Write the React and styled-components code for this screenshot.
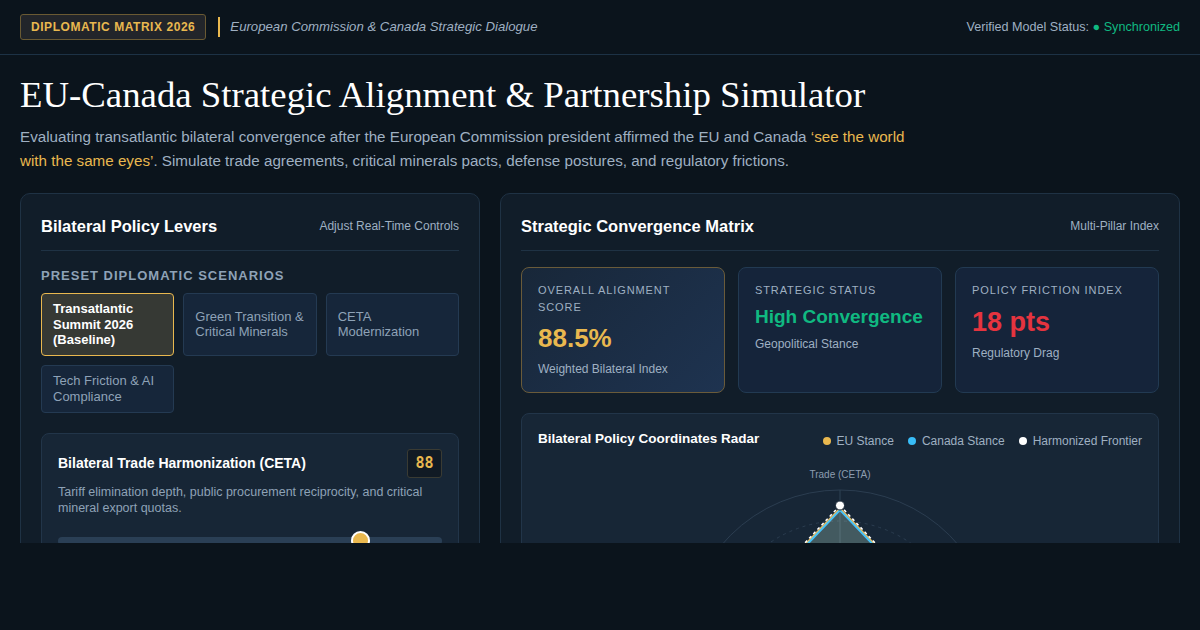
import React from "react";
import styled, { createGlobalStyle } from "styled-components";

const GlobalStyle = createGlobalStyle`
  html, body {
    margin: 0;
    padding: 0;
    background: #0b141c;
  }
  body {
    font-family: "Liberation Sans", Arial, sans-serif;
    color: #e6edf3;
  }
  * { box-sizing: border-box; }
`;

const scenarios = [
  { label: "Transatlantic Summit 2026 (Baseline)", active: true },
  { label: "Green Transition & Critical Minerals" },
  { label: "CETA Modernization" },
  { label: "Tech Friction & AI Compliance" },
];

const metrics = [
  { label: "Overall Alignment Score", value: "88.5%", sub: "Weighted Bilateral Index", tone: "gold", size: 26, featured: true },
  { label: "Strategic Status", value: "High Convergence", sub: "Geopolitical Stance", tone: "green", size: 19 },
  { label: "Policy Friction Index", value: "18 pts", sub: "Regulatory Drag", tone: "red", size: 27 },
];

const tones = { gold: "#e9b84f", green: "#10b981", red: "#e5343f" };

// radar: 5 pillars, values 0..1
const axes = [
  { name: "Trade (CETA)", eu: 0.88, ca: 0.87, hz: 0.9 },
  { name: "Critical Minerals", eu: 0.68, ca: 0.67, hz: 0.68 },
  { name: "Defense", eu: 0.72, ca: 0.7, hz: 0.71 },
  { name: "Digital & AI", eu: 0.6, ca: 0.62, hz: 0.6 },
  { name: "Climate", eu: 0.68, ca: 0.67, hz: 0.68 },
];

const CX = 180;
const CY = 185;
const R = 155;

const pt = (i, v) => {
  const a = (Math.PI * 2 * i) / axes.length - Math.PI / 2;
  return [CX + Math.cos(a) * R * v, CY + Math.sin(a) * R * v];
};
const poly = (key) => axes.map((ax, i) => pt(i, ax[key]).join(",")).join(" ");

const App = () => (
  <Page>
    <GlobalStyle />
    <TopBar>
      <Brand>
        <Badge>Diplomatic Matrix 2026</Badge>
        <Tagline>European Commission &amp; Canada Strategic Dialogue</Tagline>
      </Brand>
      <Status>
        Verified Model Status: <Synced>● Synchronized</Synced>
      </Status>
    </TopBar>

    <Main>
      <Title>EU-Canada Strategic Alignment &amp; Partnership Simulator</Title>
      <Lead>
        Evaluating transatlantic bilateral convergence after the European Commission president affirmed the EU and
        Canada <Quote>‘see the world with the same eyes’</Quote>. Simulate trade agreements, critical minerals pacts,
        defense postures, and regulatory frictions.
      </Lead>

      <Columns>
        <Panel>
          <PanelHead>
            <PanelTitle>Bilateral Policy Levers</PanelTitle>
            <PanelNote>Adjust Real-Time Controls</PanelNote>
          </PanelHead>

          <SectionLabel>Preset Diplomatic Scenarios</SectionLabel>
          <ScenarioGrid>
            {scenarios.map((s) => (
              <ScenarioButton key={s.label} $active={s.active}>
                {s.label}
              </ScenarioButton>
            ))}
          </ScenarioGrid>

          <LeverCard>
            <LeverHead>
              <LeverTitle>Bilateral Trade Harmonization (CETA)</LeverTitle>
              <LeverValue>88</LeverValue>
            </LeverHead>
            <LeverText>
              Tariff elimination depth, public procurement reciprocity, and critical mineral export quotas.
            </LeverText>
            <Track>
              <Thumb $pct={78.6} />
            </Track>
          </LeverCard>
        </Panel>

        <Panel>
          <PanelHead>
            <PanelTitle>Strategic Convergence Matrix</PanelTitle>
            <PanelNote>Multi-Pillar Index</PanelNote>
          </PanelHead>

          <MetricGrid>
            {metrics.map((m) => (
              <MetricCard key={m.label} $featured={m.featured}>
                <MetricLabel>{m.label}</MetricLabel>
                <MetricValue $tone={m.tone} $size={m.size}>
                  {m.value}
                </MetricValue>
                <MetricSub>{m.sub}</MetricSub>
              </MetricCard>
            ))}
          </MetricGrid>

          <RadarCard>
            <RadarHead>
              <RadarTitle>Bilateral Policy Coordinates Radar</RadarTitle>
              <Legend>
                <LegendItem $color="#e9b84f">EU Stance</LegendItem>
                <LegendItem $color="#38bdf8">Canada Stance</LegendItem>
                <LegendItem $color="#ffffff">Harmonized Frontier</LegendItem>
              </Legend>
            </RadarHead>
            <RadarSvg viewBox="0 0 360 360" width="360" height="360">
              {[0.2, 0.4, 0.6, 0.8].map((f) => (
                <circle key={f} cx={CX} cy={CY} r={R * f} fill="none" stroke="#2b3d50" strokeDasharray="3 4" />
              ))}
              <circle cx={CX} cy={CY} r={R} fill="none" stroke="#2b3d50" />
              {axes.map((ax, i) => {
                const [x, y] = pt(i, 1);
                return <line key={ax.name} x1={CX} y1={CY} x2={x} y2={y} stroke="#2f4255" />;
              })}
              <text x={CX} y={18} textAnchor="middle" fontSize="10" fill="#8c9db0" fontFamily="Liberation Sans, Arial, sans-serif">
                Trade (CETA)
              </text>
              <polygon points={poly("eu")} fill="rgba(233,184,79,0.14)" stroke="#e9b84f" strokeWidth="2" />
              <polygon points={poly("ca")} fill="rgba(56,189,248,0.14)" stroke="#38bdf8" strokeWidth="2" />
              <polygon points={poly("hz")} fill="rgba(255,255,255,0.08)" stroke="#ffffff" strokeWidth="1.5" strokeDasharray="3 3" />
              <circle cx={pt(0, 0.9)[0]} cy={pt(0, 0.9)[1]} r="4.5" fill="#ffffff" stroke="#172636" strokeWidth="1" />
            </RadarSvg>
          </RadarCard>
        </Panel>
      </Columns>
    </Main>
  </Page>
);

const Page = styled.div`
  height: 543px;
  overflow: hidden;
  background: #0b141c;
`;

const TopBar = styled.header`
  height: 55px;
  padding: 0 20px;
  display: flex;
  align-items: center;
  justify-content: space-between;
  border-bottom: 1px solid #1d3245;
`;

const Brand = styled.div`
  display: flex;
  align-items: center;
  gap: 12px;
`;

const Badge = styled.div`
  height: 26px;
  padding: 0 10px;
  display: flex;
  align-items: center;
  border: 1px solid #6a5a33;
  border-radius: 3px;
  background: #22252a;
  color: #e9b84f;
  font-size: 12px;
  font-weight: 700;
  letter-spacing: 0.55px;
  text-transform: uppercase;
`;

const Tagline = styled.div`
  border-left: 2px solid #e9b84f;
  padding-left: 10px;
  line-height: 20px;
  font-size: 13.2px;
  font-style: italic;
  color: #9fb0c2;
`;

const Status = styled.div`
  font-size: 12.6px;
  color: #9fb0c2;
`;

const Synced = styled.span`
  color: #10b981;
`;

const Main = styled.main`
  padding: 18px 20px 0;
`;

const Title = styled.h1`
  margin: 0;
  font-family: "Liberation Serif", "Times New Roman", serif;
  font-weight: 400;
  font-size: 36.8px;
  line-height: 44px;
  color: #ffffff;
`;

const Lead = styled.p`
  margin: 8px 0 0;
  max-width: 910px;
  font-size: 15.2px;
  line-height: 24px;
  color: #9fb0c2;
`;

const Quote = styled.span`
  color: #e9b84f;
`;

const Columns = styled.div`
  margin-top: 20px;
  display: grid;
  grid-template-columns: 460px 1fr;
  gap: 20px;
  align-items: start;
`;

const Panel = styled.section`
  background: #111d29;
  border: 1px solid #1f3244;
  border-radius: 10px;
  padding: 19px 20px 20px;
  min-height: 420px;
`;

const PanelHead = styled.div`
  display: flex;
  align-items: center;
  justify-content: space-between;
  padding-bottom: 11px;
  border-bottom: 1px solid #1f3244;
  margin-bottom: 16px;
`;

const PanelTitle = styled.h2`
  margin: 0;
  font-size: 16.5px;
  line-height: 26px;
  font-weight: 700;
  color: #ffffff;
`;

const PanelNote = styled.span`
  font-size: 12px;
  color: #9fb0c2;
`;

const SectionLabel = styled.div`
  font-size: 13px;
  line-height: 18px;
  font-weight: 700;
  letter-spacing: 1px;
  text-transform: uppercase;
  color: #8ea2b7;
  margin-bottom: 8px;
`;

const ScenarioGrid = styled.div`
  display: grid;
  grid-template-columns: repeat(3, 1fr);
  gap: 9px;
`;

const ScenarioButton = styled.button`
  text-align: left;
  font-family: inherit;
  font-size: 13px;
  line-height: 15.6px;
  padding: 7px 11px;
  border-radius: 4px;
  min-height: 48px;
  display: flex;
  align-items: center;
  border: 1px solid ${(p) => (p.$active ? "#e9b84f" : "#243a52")};
  background: ${(p) => (p.$active ? "#363934" : "#16263a")};
  color: ${(p) => (p.$active ? "#ffffff" : "#8ea2b7")};
  font-weight: ${(p) => (p.$active ? 700 : 400)};
`;

const LeverCard = styled.div`
  margin-top: 20px;
  background: #172636;
  border: 1px solid #223549;
  border-radius: 8px;
  padding: 15px 16px 16px;
`;

const LeverHead = styled.div`
  display: flex;
  align-items: center;
  justify-content: space-between;
`;

const LeverTitle = styled.h3`
  margin: 0;
  font-size: 14px;
  font-weight: 700;
  color: #ffffff;
`;

const LeverValue = styled.div`
  width: 35px;
  height: 29px;
  display: flex;
  align-items: center;
  justify-content: center;
  background: #111a24;
  border: 1px solid #3a3b33;
  border-radius: 3px;
  font-family: "DejaVu Sans Mono", "Liberation Mono", monospace;
  font-size: 15px;
  font-weight: 700;
  color: #e9b84f;
`;

const LeverText = styled.p`
  margin: 6px 0 0;
  font-size: 12.5px;
  line-height: 16px;
  color: #8ea2b7;
`;

const Track = styled.div`
  position: relative;
  margin-top: 21px;
  height: 8px;
  border-radius: 4px;
  background: #2a3f55;
`;

const Thumb = styled.div`
  position: absolute;
  top: -6px;
  left: ${(p) => p.$pct}%;
  width: 19px;
  height: 19px;
  margin-left: -9px;
  border-radius: 50%;
  background: #e9b84f;
  border: 2px solid #ffffff;
`;

const MetricGrid = styled.div`
  display: grid;
  grid-template-columns: repeat(3, 1fr);
  gap: 13px;
`;

const MetricCard = styled.div`
  padding: 14px 16px 15px;
  border-radius: 8px;
  border: 1px solid ${(p) => (p.$featured ? "#6a5b3a" : "#223a52")};
  background: ${(p) => (p.$featured ? "linear-gradient(135deg, #182739 0%, #1e3350 100%)" : "#15243a")};
`;

const MetricLabel = styled.div`
  font-size: 11px;
  line-height: 17px;
  letter-spacing: 0.9px;
  text-transform: uppercase;
  color: #9fb0c2;
`;

const MetricValue = styled.div`
  margin-top: 7px;
  font-size: ${(p) => p.$size}px;
  line-height: 1.2;
  font-weight: 700;
  color: ${(p) => tones[p.$tone]};
`;

const MetricSub = styled.div`
  margin-top: 7px;
  font-size: 12px;
  line-height: 16px;
  color: #9fb0c2;
`;

const RadarCard = styled.div`
  margin-top: 20px;
  background: #172636;
  border: 1px solid #223549;
  border-radius: 8px;
  padding: 16px 16px 12px;
`;

const RadarHead = styled.div`
  display: flex;
  align-items: center;
  justify-content: space-between;
`;

const RadarTitle = styled.h3`
  margin: 0;
  font-size: 13.5px;
  line-height: 18px;
  font-weight: 700;
  color: #ffffff;
`;

const Legend = styled.div`
  display: flex;
  gap: 14px;
  margin-top: 4px;
`;

const LegendItem = styled.span`
  display: flex;
  align-items: center;
  gap: 6px;
  font-size: 12px;
  color: #9fb0c2;

  &::before {
    content: "";
    width: 8px;
    height: 8px;
    border-radius: 50%;
    background: ${(p) => p.$color};
  }
`;

const RadarSvg = styled.svg`
  display: block;
  margin: 12px auto 0;
`;

export default App;
